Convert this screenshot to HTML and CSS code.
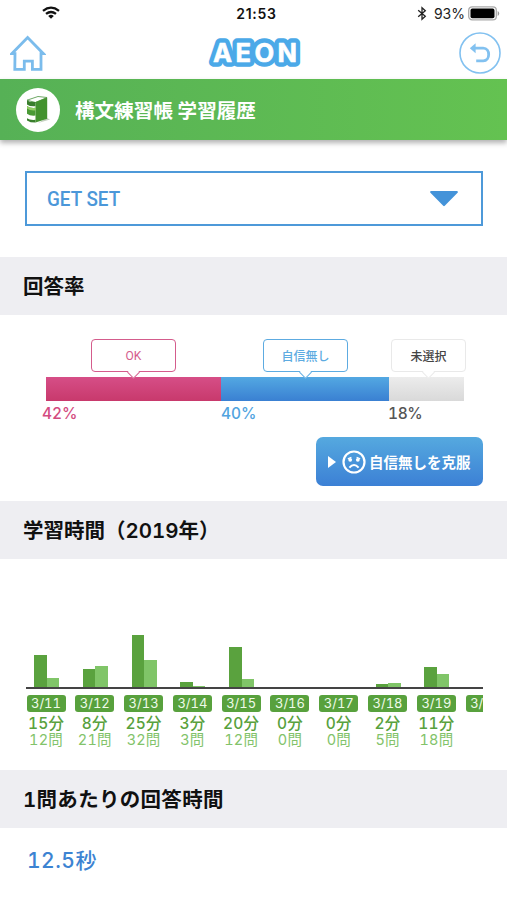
FILE: index.html
```html
<!DOCTYPE html>
<html lang="ja">
<head>
<meta charset="utf-8">
<title>構文練習帳 学習履歴</title>
<link rel="stylesheet" href="styles.css">
</head>
<body>
<div class="status">
  <svg class="wifi" width="18" height="14" viewBox="0 0 18 14" fill="none" stroke="#111" stroke-width="2.3"><path d="M1 4.8Q9-1.6 17 4.8M4 7.9Q9 4 14 7.9"/><path d="M6.2 9.9Q9 7.8 11.8 9.9L9 12.7Z" fill="#111" stroke="none"/></svg>
  <span class="clock">21:53</span>
  <div class="power">
    <svg width="10" height="15" viewBox="0 0 10 15" fill="none" stroke="#222" stroke-width="1.3"><path d="M1.2 4.2L8.3 10.3L5 13.2V1.8L8.3 4.7L1.2 10.8"/></svg>
    <span class="percent">93%</span>
    <svg width="32" height="15" viewBox="0 0 32 15"><rect x=".7" y=".8" width="27.6" height="13" rx="3.4" fill="#fff" stroke="#aaa" stroke-width="1.3"/><rect x="2.5" y="2.6" width="24" height="9.6" rx="1.8"/><path d="M29.7 5V10Q31.2 9.2 31.2 7.5T29.7 5" fill="#999"/></svg>
  </div>
</div>
<header class="nav">
  <svg class="home" width="36" height="36" viewBox="0 0 36 36" fill="none" stroke="#7bbcec" stroke-width="2.8"><path d="M5 18.7H1.8L17.6 2.6L33.4 18.7H31V34.3H22.4V26.2H14.3V34.3H4.8Z"/></svg>
  <svg class="logo" width="96" height="32" viewBox="0 0 96 32"><text x="5" y="25" textLength="84" class="logo-text logo-back">AEON</text><text x="5" y="25" textLength="84" class="logo-text">AEON</text></svg>
  <svg class="back" width="42" height="42" viewBox="0 0 42 42" fill="none" stroke="#82c1f0"><circle cx="21" cy="21" r="20" stroke-width="1.6"/><path d="M14 16.2H24.2C31.5 16.2 31.5 28.8 24.2 28.8H17.2" stroke-width="2.8"/><path d="M10.8 16.2L16.6 11.2V21.2Z" fill="#82c1f0" stroke="none"/></svg>
</header>
<div class="banner">
  <div class="book">
    <svg width="24" height="29" viewBox="0 0 24 29"><path d="M21 23L24 24.5L12 28Z" fill="#c3cfbf"/><path d="M1 5.2L12 1.5L21 2.5L9.5 7.5Z" fill="#fff" stroke="#5f9e55" stroke-width=".9"/><path d="M9.5 7L21.2 2.4V23.8L9.5 27.6Z" fill="#43922f"/><path d="M1 5.2Q4 7.6 9.5 7V11.2Q4 11.8 1 9.4Z" fill="#397e2d"/><path d="M1 11Q4 13.4 9.5 12.8V20.6Q4 21.2 1 18.8Z" fill="#4a9a36"/><path d="M1 11Q4 13.4 9.5 12.8V15.4Q4 16 1 13.6Z" fill="#92cd63"/><path d="M1 23.2Q4 25.4 9.5 24.8V27.6Q4 27.6 1 25.4Z" fill="#397e2d"/></svg>
  </div>
  <h1>構文練習帳 学習履歴</h1>
</div>
<div class="select">
  <span>GET SET</span>
  <svg width="30" height="18" viewBox="0 0 30 18"><path d="M2.2 2H27.8L15 15Z" fill="#4493d9" stroke="#4493d9" stroke-width="2.2" stroke-linejoin="round"/></svg>
</div>
<h2><span>回答率</span></h2>
<section class="rate">
  <div class="bubbles">
    <div class="bubble ok"><span>OK</span><i></i></div>
    <div class="bubble unsure"><span>自信無し</span><i></i></div>
    <div class="bubble none"><span>未選択</span><i></i></div>
  </div>
  <div class="stack"><div class="seg-ok"></div><div class="seg-unsure"></div><div class="seg-none"></div></div>
  <div class="percents"><span class="p-ok">42%</span><span class="p-unsure">40%</span><span class="p-none">18%</span></div>
  <div class="action">
    <svg class="play" width="8" height="12" viewBox="0 0 8 12"><path d="M0 0L8 6L0 12Z" fill="#fff"/></svg>
    <svg class="face" width="24" height="24" viewBox="0 0 24 24" fill="none" stroke="#fff" stroke-width="2.2"><circle cx="12" cy="12" r="10.5"/><path d="M7.4 17.6Q12 12.4 16.6 17.6" stroke-width="2"/><path d="M5.8 8.8L9.4 7.2M18.2 8.8L14.6 7.2" stroke-width="1.2"/><circle cx="8.2" cy="9.8" r="1.9" fill="#fff" stroke="none"/><circle cx="15.8" cy="9.8" r="1.9" fill="#fff" stroke="none"/></svg>
    <span>自信無しを克服</span>
  </div>
</section>
<h2><span class="t-time">学習時間（2019年）</span></h2>
<section class="chart">
  <div class="day"><div class="bars"><b style="height:32px"></b><b class="light" style="height:9px"></b></div><span class="date">3/11</span><span class="min">15分</span><span class="count">12問</span></div>
  <div class="day"><div class="bars"><b style="height:18px"></b><b class="light" style="height:21px"></b></div><span class="date">3/12</span><span class="min">8分</span><span class="count">21問</span></div>
  <div class="day"><div class="bars"><b style="height:52px"></b><b class="light" style="height:27px"></b></div><span class="date">3/13</span><span class="min">25分</span><span class="count">32問</span></div>
  <div class="day"><div class="bars"><b style="height:5px"></b><b class="light" style="height:1px"></b></div><span class="date">3/14</span><span class="min">3分</span><span class="count">3問</span></div>
  <div class="day"><div class="bars"><b style="height:40px"></b><b class="light" style="height:8px"></b></div><span class="date">3/15</span><span class="min">20分</span><span class="count">12問</span></div>
  <div class="day"><div class="bars"></div><span class="date">3/16</span><span class="min">0分</span><span class="count">0問</span></div>
  <div class="day"><div class="bars"></div><span class="date">3/17</span><span class="min">0分</span><span class="count">0問</span></div>
  <div class="day"><div class="bars"><b style="height:3px"></b><b class="light" style="height:4px"></b></div><span class="date">3/18</span><span class="min">2分</span><span class="count">5問</span></div>
  <div class="day"><div class="bars"><b style="height:20px"></b><b class="light" style="height:13px"></b></div><span class="date">3/19</span><span class="min">11分</span><span class="count">18問</span></div>
  <div class="day"><div class="bars"></div><span class="date">3/20</span></div>
</section>
<h2><span class="t-avg">1問あたりの回答時間</span></h2>
<p class="average">12.5秒</p>
</body>
</html>
```
FILE: styles.css
```css
* { box-sizing: border-box; }
body {
  margin: 0;
  height: 900px;
  overflow: hidden;
  background: #fff;
  color: #111;
  font-family: Inter, "Noto Sans CJK JP", sans-serif;
}
svg { display: block; flex: none; }
span { white-space: nowrap; }
.status {
  height: 27px;
  display: grid;
  grid-template-columns: 1fr auto 1fr;
  align-items: center;
  padding: 0 7px 0 42px;
}
.status .wifi { margin-top: -1px; }
.clock { font-size: 14px; font-weight: 600; letter-spacing: .7px; margin-left: -29px; }
.power { display: flex; align-items: center; justify-content: flex-end; }
.percent { font-size: 14px; margin: 0 3px 0 7px; color: #222; letter-spacing: 0; }
.nav {
  height: 52px;
  display: flex;
  align-items: center;
  justify-content: space-between;
  padding: 0 6px 0 10px;
}
.logo { margin-left: 6px; }
.logo-text {
  font: 700 25.5px Inter, sans-serif;
  fill: #fff;
  stroke: #fff;
  stroke-width: .6px;
  stroke-linejoin: round;
}
.logo-back { stroke: #4ba9e8; stroke-width: 9.5px; }
.banner {
  height: 61px;
  display: flex;
  align-items: center;
  padding-left: 16px;
  gap: 15px;
  background: linear-gradient(90deg, #56b156, #64c251);
  box-shadow: 0 3px 5px rgba(0, 0, 0, .3);
}
.book {
  width: 44px;
  height: 44px;
  border-radius: 50%;
  background: #fff;
  display: flex;
  align-items: center;
  justify-content: center;
}
h1 { margin: 0; color: #fff; font-family: "Noto Sans CJK JP", sans-serif; font-size: 19.5px; font-weight: 700; letter-spacing: .1px; }
.select {
  margin: 31px 24px 31px 25px;
  height: 55px;
  border: 2px solid #4d99d9;
  padding: 0 22px 0 20px;
  display: flex;
  align-items: center;
  justify-content: space-between;
  color: #4b97d9;
}
.select span { font: 500 20.5px Roboto, sans-serif; transform: scaleX(.92); transform-origin: left; }
h2 {
  margin: 0;
  height: 58px;
  padding: 2px 0 0 23px;
  display: flex;
  align-items: center;
  background: #eeeef2;
  font-size: 20.5px;
  line-height: 30px;
  font-weight: 600;
  font-variant-numeric: tabular-nums;
}
.t-avg { letter-spacing: .3px; }
.rate { height: 186px; padding: 24px 24px 0 0; }
.bubbles { display: flex; height: 38px; padding-left: 91px; }
.bubble {
  position: relative;
  width: 85px;
  height: 33px;
  border: 1.5px solid;
  border-radius: 4px;
  background: #fff;
  display: flex;
  align-items: center;
  justify-content: center;
  font-size: 12px;
  font-weight: 500;
}
.bubble span { margin-top: -1px; }
.bubble i {
  position: absolute;
  left: calc(50% - 5px);
  bottom: -6px;
  width: 9px;
  height: 9px;
  background: #fff;
  border: solid;
  border-width: 0 1.5px 1.5px 0;
  transform: rotate(45deg);
}
.ok { color: #d45c8c; }
.ok span { font-family: Roboto, sans-serif; font-weight: 400; margin-top: 1px; }
.unsure { color: #5dabe1; margin-left: 87px; }
.none { color: #e9e9e9; width: 75px; margin-left: 43px; }
.none span { color: #444; }
.stack { display: flex; height: 24px; width: 418px; margin-left: 46px; }
.seg-ok { width: 175px; background: linear-gradient(#d64e87, #c8396c); }
.seg-unsure { width: 168px; background: linear-gradient(#53a8e2, #3a80d2); }
.seg-none { width: 75px; background: linear-gradient(#ececec, #d9d9d9); }
.percents {
  display: grid;
  grid-template-columns: 179px 167px auto;
  height: 36px;
  padding-left: 42px;
  font-size: 15.5px;
  line-height: 25px;
  font-weight: 500;
  font-variant-numeric: tabular-nums;
}
.p-ok { color: #d34b80; }
.p-unsure { color: #51a4df; }
.p-none { color: #555; letter-spacing: -.4px; }
.action {
  width: 167px;
  height: 49px;
  margin-left: auto;
  border-radius: 7px;
  background: linear-gradient(#55a9df, #3c80d5);
  color: #fff;
  display: flex;
  align-items: center;
  padding-left: 12px;
  font-size: 14.5px;
  font-weight: 700;
}
.action span { margin-top: -1px; }
.play { margin-right: 6px; }
.face { margin-right: 3px; }
.chart {
  height: 211px;
  margin: 0 24px 0 26px;
  padding-left: .5px;
  display: flex;
  gap: 9.8px;
  overflow: hidden;
  background: linear-gradient(#444, #444) 0 128px / 100% 2px no-repeat;
  font-variant-numeric: tabular-nums;
}
.day {
  flex: 0 0 39px;
  min-width: 0;
  display: flex;
  flex-direction: column;
  align-items: center;
}
.bars { height: 128px; width: 25px; display: flex; align-items: flex-end; flex: none; margin-left: 1px; }
.bars b { width: 12.5px; background: #5aa23e; }
.bars .light { background: #80c568; }
.date {
  width: 39px;
  height: 17px;
  margin-top: 8px;
  border-radius: 3px;
  background: #58a13d;
  color: #effbe9;
  font-size: 13px;
  line-height: 17px;
  text-align: center;
}
.min { font-size: 15.5px; line-height: 19px; margin-top: 2px; font-weight: 500; color: #58a13d; letter-spacing: .2px; }
.count { font-size: 14.5px; line-height: 16px; margin-top: -1px; font-weight: 400; color: #82c36a; letter-spacing: .2px; }
.average { margin: 15px 0 0 27px; font-size: 21px; line-height: 36px; font-weight: 500; color: #3c83d2; letter-spacing: .5px; font-variant-numeric: tabular-nums; }
```
